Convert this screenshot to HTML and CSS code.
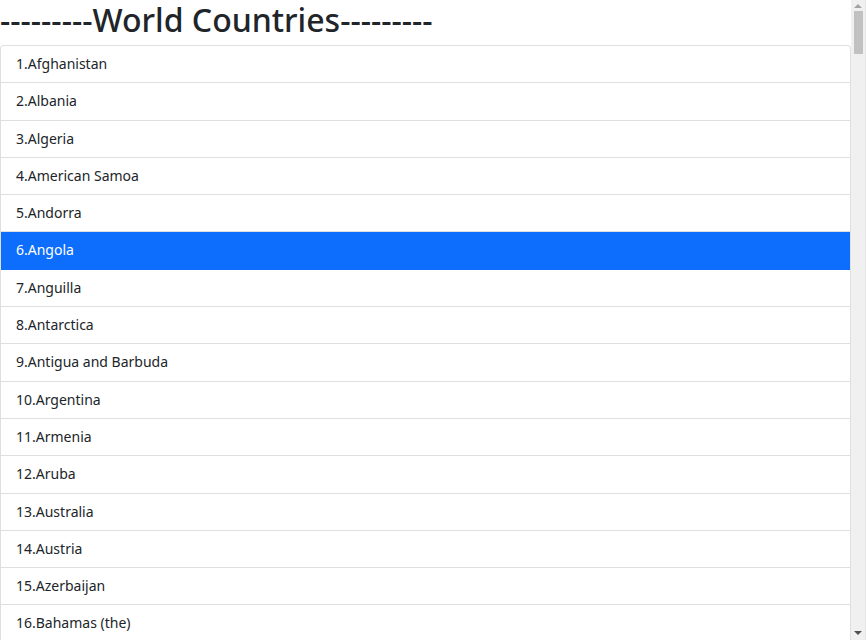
FILE: index.html
```html
<!DOCTYPE html>
<html>
<head>
<meta charset="utf-8">
<link rel="stylesheet" href="styles.css">
</head>
<body>
<div class="page">
<main class="main">
<h1 class="title">---------World Countries---------</h1>
<ul class="list-group">
<li class="item">1.Afghanistan</li>
<li class="item">2.Albania</li>
<li class="item">3.Algeria</li>
<li class="item">4.American Samoa</li>
<li class="item">5.Andorra</li>
<li class="item active">6.Angola</li>
<li class="item">7.Anguilla</li>
<li class="item">8.Antarctica</li>
<li class="item">9.Antigua and Barbuda</li>
<li class="item">10.Argentina</li>
<li class="item">11.Armenia</li>
<li class="item">12.Aruba</li>
<li class="item">13.Australia</li>
<li class="item">14.Austria</li>
<li class="item">15.Azerbaijan</li>
<li class="item">16.Bahamas (the)</li>
</ul>
</main>
<div class="scrollbar">
<span class="arrow up"></span>
<div class="track"><div class="thumb"></div></div>
<span class="arrow down"></span>
</div>
</div>
</body>
</html>
```

FILE: styles.css
```css
html, body {
  margin: 0;
  padding: 0;
  overflow: hidden;
}
body {
  font-family: "Noto Sans", "Open Sans", sans-serif;
  color: #212529;
  background: #fff;
}
.page {
  display: flex;
  height: 640px;
  overflow: hidden;
}
.main {
  flex: 1;
  min-width: 0;
  overflow: hidden;
}
.title {
  margin: 0 0 6px;
  font-size: 32px;
  font-weight: 500;
  line-height: 39px;
  white-space: nowrap;
}
.list-group {
  list-style: none;
  margin: 0;
  padding: 0;
  border: 1px solid #dfdfdf;
  border-bottom: 0;
  border-radius: 4px 4px 0 0;
  overflow: hidden;
}
.item {
  padding: 8px 15px;
  font-size: 14px;
  line-height: 20.3px;
  border-bottom: 1px solid #dfdfdf;
  white-space: nowrap;
}
.item.active {
  background: #0d6efd;
  color: #fff;
  border-color: #0d6efd;
}
.scrollbar {
  width: 14px;
  margin-right: 1px;
  border-right: 1px solid #e6e6e6;
  background: #f0f0f0;
  display: flex;
  flex-direction: column;
  align-items: center;
}
.arrow {
  width: 0;
  height: 0;
  border-left: 4px solid transparent;
  border-right: 4px solid transparent;
  flex: none;
}
.arrow.up {
  border-bottom: 4px solid #a3a3a3;
  margin: 4px 0 2px;
}
.arrow.down {
  border-top: 4px solid #505050;
  margin: 2px 0 5px;
}
.track {
  flex: 1;
  width: 100%;
  display: flex;
  justify-content: center;
}
.thumb {
  width: 9px;
  height: 43px;
  margin-top: 1px;
  background: #c1c1c1;
}
```
